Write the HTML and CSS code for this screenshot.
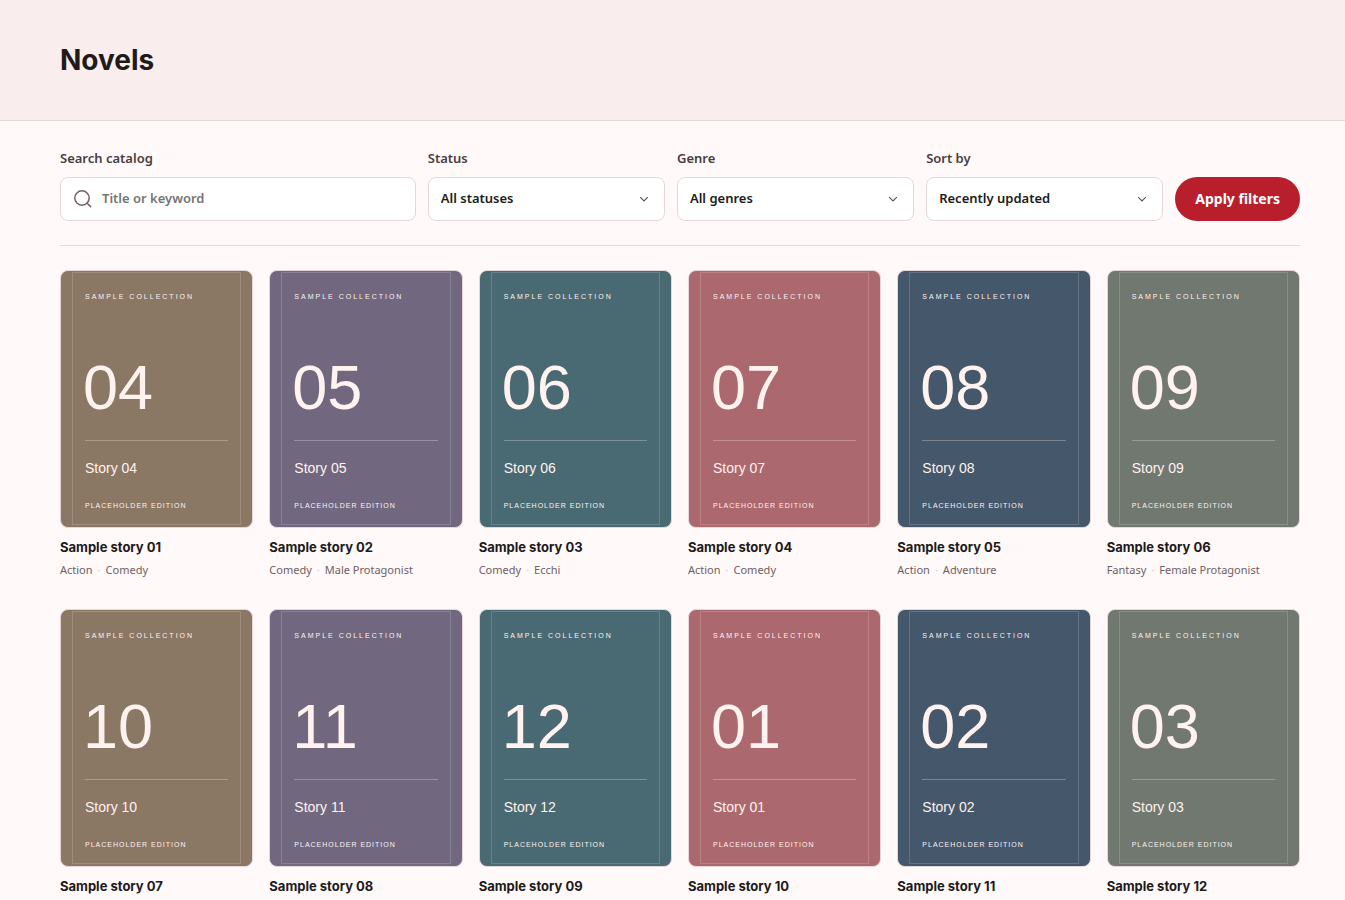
FILE: index.html
```html
<!DOCTYPE html>
<html lang="en">
<head>
<meta charset="utf-8">
<meta name="viewport" content="width=device-width, initial-scale=1">
<title>Novels</title>
<link rel="stylesheet" href="styles.css">
</head>
<body>
<header class="page-header">
  <div class="container"><h1 class="page-title">Novels</h1></div>
</header>
<main class="container">
  <form class="filters">
    <div class="field">
      <label class="label" for="q">Search catalog</label>
      <div class="control search">
        <svg class="search-icon" viewBox="0 0 20 20" aria-hidden="true"><circle cx="9" cy="9" r="7.2"/><path d="M14.2 14.2 17.6 17.6"/></svg>
        <input class="search-input" id="q" type="search" placeholder="Title or keyword">
      </div>
    </div>
    <div class="field">
      <label class="label" for="status">Status</label>
      <div class="control"><select class="select" id="status"><option>All statuses</option></select><svg class="chevron" viewBox="0 0 12 12" aria-hidden="true"><path d="m2.2 4.2 3.8 3.8 3.8-3.8"/></svg></div>
    </div>
    <div class="field">
      <label class="label" for="genre">Genre</label>
      <div class="control"><select class="select" id="genre"><option>All genres</option></select><svg class="chevron" viewBox="0 0 12 12" aria-hidden="true"><path d="m2.2 4.2 3.8 3.8 3.8-3.8"/></svg></div>
    </div>
    <div class="field">
      <label class="label" for="sort">Sort by</label>
      <div class="control"><select class="select" id="sort"><option>Recently updated</option></select><svg class="chevron" viewBox="0 0 12 12" aria-hidden="true"><path d="m2.2 4.2 3.8 3.8 3.8-3.8"/></svg></div>
    </div>
    <button class="apply" type="submit">Apply filters</button>
  </form>
  <section class="grid" id="grid" aria-label="Novels"></section>
</main>
<script src="app.js"></script>
</body>
</html>
```
FILE: app.js
```js
const tones = ["brown", "violet", "teal", "rose", "navy", "sage"];
const novels = [
  ["04", "Action", "Comedy"],
  ["05", "Comedy", "Male Protagonist"],
  ["06", "Comedy", "Ecchi"],
  ["07", "Action", "Comedy"],
  ["08", "Action", "Adventure"],
  ["09", "Fantasy", "Female Protagonist"],
  ["10"], ["11"], ["12"], ["01"], ["02"], ["03"]
];

document.getElementById("grid").innerHTML = novels.map(([number, ...genres], i) => `
  <article class="card">
    <div class="cover cover-${tones[i % tones.length]}">
      <div class="frame">
        <p class="collection">Sample collection</p>
        <p class="number">${number}</p>
        <p class="story">Story ${number}</p>
        <p class="edition">Placeholder edition</p>
      </div>
    </div>
    <h2 class="card-title">Sample story ${String(i + 1).padStart(2, "0")}</h2>
    <p class="meta">${genres.map(g => `<span>${g}</span>`).join('<span class="dot">·</span>')}</p>
  </article>`).join("");
```
FILE: styles.css
```css
* { box-sizing: border-box; }
body {
  margin: 0;
  background: #fff9f9;
  color: #211a1b;
  font-family: "Noto Sans", sans-serif;
}
h1, h2, p { margin: 0; }
.container {
  padding: 0 45px 0 60px;
}
.page-header {
  padding: 40px 0;
  background: #f9eded;
  border-bottom: 1px solid #e5d8da;
}
.page-title {
  font: 700 28px/40px Inter, sans-serif;
}
.filters {
  display: grid;
  grid-template-columns: 3fr 2fr 2fr 2fr auto;
  gap: 12px;
  align-items: end;
  padding: 27px 0 24px;
  border-bottom: 1px solid #e2d9db;
}
.field {
  display: grid;
  gap: 9px;
  min-width: 0;
}
.label {
  color: #493d40;
  font-size: 13px;
  font-weight: 600;
  line-height: 20px;
}
.control {
  position: relative;
  display: flex;
  align-items: center;
  height: 44px;
  background: #fff;
  border: 1px solid #e6d6da;
  border-radius: 8px;
}
.search {
  gap: 9px;
  padding: 0 12px;
}
.search-icon {
  width: 20px;
  height: 20px;
  flex: none;
  fill: none;
  stroke: #6f6064;
  stroke-width: 1.5;
  stroke-linecap: round;
}
.search-input, .select {
  appearance: none;
  width: 100%;
  min-width: 0;
  height: 100%;
  padding: 0 0 2px;
  border: 0;
  border-radius: 8px;
  background: transparent;
  color: #211a1b;
  font: 600 13px "Noto Sans", sans-serif;
}
.search-input::placeholder { color: #757575; opacity: 1; }
.select { padding: 0 36px 2px 12px; }
.chevron {
  position: absolute;
  right: 14px;
  width: 12px;
  height: 12px;
  fill: none;
  stroke: #5c5054;
  stroke-width: 1.1;
  pointer-events: none;
}
.apply {
  height: 44px;
  padding: 0 20px 2px;
  border: 0;
  border-radius: 22px;
  background: #b91e2c;
  color: #fff;
  font: 700 14px "Noto Sans", sans-serif;
}
.grid {
  display: grid;
  grid-template-columns: repeat(6, minmax(0, 1fr));
  gap: 30px 16px;
  padding: 24px 0 32px;
}
.cover {
  aspect-ratio: 3 / 4;
  padding: 1px 11px 2px;
  border: 1px solid #e6d6da;
  border-radius: 8px;
}
.cover-brown { background: #8a7764; }
.cover-violet { background: #71687f; }
.cover-teal { background: #496a73; }
.cover-rose { background: #ab686e; }
.cover-navy { background: #45576a; }
.cover-sage { background: #70786f; }
.frame {
  height: 100%;
  padding: 18px 12px 0;
  border: 1px solid rgb(255 240 238 / 18%);
  color: #fff2ef;
  font-family: "Liberation Sans", Arial, sans-serif;
}
.collection, .edition {
  text-transform: uppercase;
  white-space: nowrap;
  color: #fff2ef;
}
.collection {
  font-size: 7px;
  line-height: 12px;
  letter-spacing: 2px;
}
.number {
  padding: 52px 0 21px;
  border-bottom: 1px solid rgb(255 240 238 / 30%);
  font-size: 63px;
  line-height: 64px;
  text-indent: -2px;
}
.story {
  padding-top: 17px;
  font-size: 14px;
  line-height: 20px;
}
.edition {
  padding-top: 22px;
  font-size: 7px;
  line-height: 12px;
  letter-spacing: 1px;
}
.card-title {
  margin-top: 9px;
  font: 700 13px/20px Inter, sans-serif;
}
.meta {
  display: flex;
  gap: 5px;
  min-height: 18px;
  margin-top: 4px;
  color: #6f6064;
  font-size: 11px;
  line-height: 18px;
  white-space: nowrap;
}
.dot { color: #d9c8cc; }
```
